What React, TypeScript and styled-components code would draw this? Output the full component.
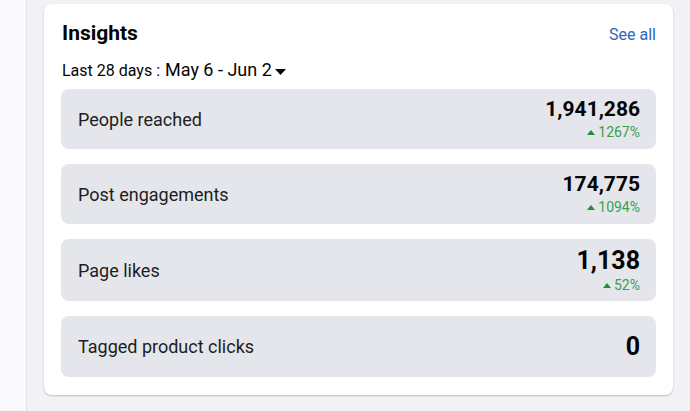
import React from "react";
import styled, { createGlobalStyle } from "styled-components";

const Global = createGlobalStyle`
  html, body { margin: 0; padding: 0; }
  body {
    font-family: Roboto, "Liberation Sans", Arial, sans-serif;
    background: #f0f2f5;
    color: #1c1e21;
  }
`;

const Page = styled.div`
  display: flex;
  width: 690px;
  height: 411px;
  overflow: hidden;
  background: #f0f2f5;
`;

const SideStrip = styled.div`
  width: 26px;
  flex: none;
  background: #f9f9fb;
  border-right: 1px solid #e3e4e8;
`;

const Main = styled.div`
  flex: 1;
  padding: 4px 17px 0 17px;
`;

const Card = styled.section`
  background: #ffffff;
  border-radius: 8px;
  box-shadow: 0 1px 2px rgba(0, 0, 0, 0.22);
  padding: 15px 17px 18px 17px;
  display: flex;
  flex-direction: column;
`;

const Header = styled.div`
  display: flex;
  align-items: baseline;
  justify-content: space-between;
`;

const Title = styled.h2`
  margin: 0 0 0 1px;
  font-size: 21px;
  line-height: 28px;
  font-weight: 700;
  color: #050505;
`;

const SeeAll = styled.a`
  font-size: 16px;
  color: #2f66b8;
  text-decoration: none;
`;

const DateLine = styled.div`
  margin-top: 11px;
  display: flex;
  align-items: baseline;
  line-height: 24px;
  color: #050505;
`;

const DateLabel = styled.span`
  font-size: 16px;
  margin-right: 5px;
  margin-left: 1px;
`;

const DateRange = styled.span`
  font-size: 18px;
`;

const Caret = styled.svg`
  margin-left: 3px;
  align-self: center;
  margin-top: 2px;
`;

const Rows = styled.div`
  margin-top: 6px;
  display: flex;
  flex-direction: column;
  gap: 15px;
`;

const Row = styled.div<{ $h: number }>`
  height: ${(p) => p.$h}px;
  background: #e4e6eb;
  border-radius: 8px;
  padding: 0 16px 0 17px;
  display: flex;
  align-items: center;
  justify-content: space-between;
`;

const Label = styled.span`
  font-size: 18px;
  color: #1c1e21;
`;

const Stat = styled.div`
  display: flex;
  flex-direction: column;
  align-items: flex-end;
`;

const Value = styled.span<{ $size: number }>`
  font-size: ${(p) => p.$size}px;
  line-height: ${(p) => p.$size + 4}px;
  font-weight: 700;
  color: #050505;
`;

const Change = styled.span`
  margin-top: 2px;
  display: flex;
  align-items: center;
  gap: 3px;
  font-size: 14px;
  line-height: 17px;
  color: #3aa04e;
`;

const Arrow = () => (
  <svg width="8" height="5" viewBox="0 0 8 5">
    <path d="M0 5 L4 0 L8 5 Z" fill="#1f8f34" />
  </svg>
);

type Metric = { label: string; value: string; size: number; change?: string; h: number };

const metrics: Metric[] = [
  { label: "People reached", value: "1,941,286", size: 21, change: "1267%", h: 60 },
  { label: "Post engagements", value: "174,775", size: 21, change: "1094%", h: 60 },
  { label: "Page likes", value: "1,138", size: 25, change: "52%", h: 62 },
  { label: "Tagged product clicks", value: "0", size: 25, h: 61 },
];

export default function App() {
  return (
    <>
      <Global />
      <Page>
        <SideStrip />
        <Main>
          <Card>
            <Header>
              <Title>Insights</Title>
              <SeeAll href="#">See all</SeeAll>
            </Header>
            <DateLine>
              <DateLabel>Last 28 days :</DateLabel>
              <DateRange>May 6 - Jun 2</DateRange>
              <Caret width="11" height="6" viewBox="0 0 11 6">
                <path d="M0 0 L11 0 L5.5 6 Z" fill="#050505" />
              </Caret>
            </DateLine>
            <Rows>
              {metrics.map((m) => (
                <Row key={m.label} $h={m.h}>
                  <Label>{m.label}</Label>
                  <Stat>
                    <Value $size={m.size}>{m.value}</Value>
                    {m.change && (
                      <Change>
                        <Arrow />
                        {m.change}
                      </Change>
                    )}
                  </Stat>
                </Row>
              ))}
            </Rows>
          </Card>
        </Main>
      </Page>
    </>
  );
}
